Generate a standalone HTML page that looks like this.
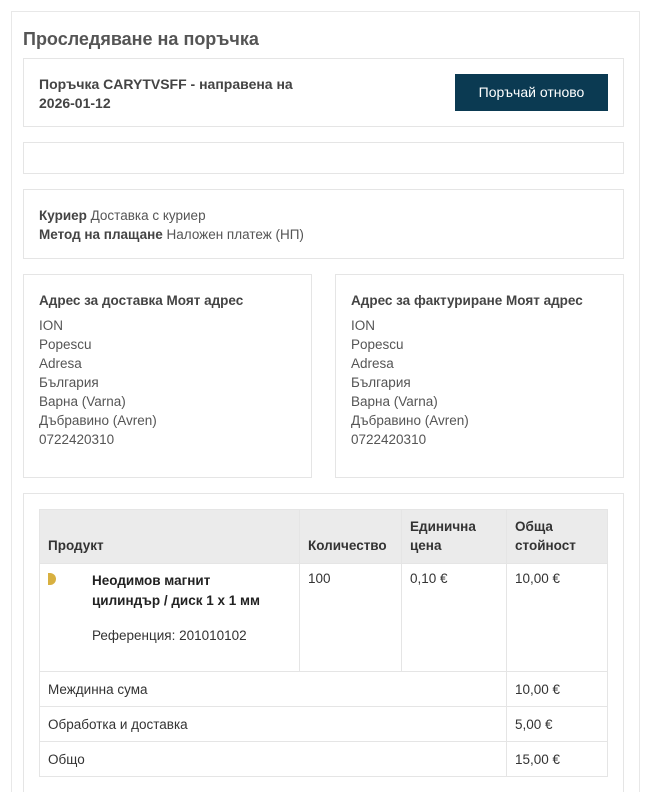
<!DOCTYPE html>
<html style="width:648px;height:792px;overflow:hidden"><head><meta charset="utf-8"><style>
*{box-sizing:border-box;margin:0;padding:0}
body{width:648px;height:792px;background:#fff;font-family:"Liberation Sans",sans-serif;color:#555;font-size:13.5px;overflow:hidden;position:relative}
.abs{position:absolute}
.card{position:absolute;border:1px solid #e5e5e5;background:#fff}
b{color:#444}
table{border-collapse:collapse;position:absolute;left:39px;top:509px;width:569px;font-size:13.5px;color:#333}
td,th{border:1px solid #e5e5e5;vertical-align:top;text-align:left;padding:0 8px}
th{background:#ebebeb;vertical-align:bottom;padding-bottom:8px;font-weight:bold;color:#333;line-height:19px}
</style></head><body>
<div class="card" style="left:11px;top:11px;width:629px;height:800px;border-color:#e8e8e8"></div>
<div class="abs" style="left:23px;top:29px;font-size:18px;font-weight:bold;color:#555">Проследяване на поръчка</div>
<div class="card" style="left:23px;top:58px;width:601px;height:69px"></div>
<div class="abs" style="left:39px;top:75px;font-weight:bold;line-height:19px;color:#444;font-size:14px">Поръчка CARYTVSFF - направена на<br>2026-01-12</div>
<div class="abs" style="left:455px;top:74px;width:153px;height:37px;background:#0b3a52;color:#fff;font-size:14px;text-align:center;line-height:37px">Поръчай отново</div>
<div class="card" style="left:23px;top:142px;width:601px;height:32px"></div>
<div class="card" style="left:23px;top:189px;width:601px;height:70px"></div>
<div class="abs" style="left:39px;top:206px;line-height:19px"><b>Куриер</b> Доставка с куриер<br><b>Метод на плащане</b> Наложен платеж (НП)</div>
<div class="card" style="left:23px;top:274px;width:289px;height:204px"></div>
<div class="card" style="left:335px;top:274px;width:289px;height:204px"></div>
<div class="abs" style="left:39px;top:291px;line-height:19px"><b>Адрес за доставка Моят адрес</b><div style="margin-top:6px">ION<br>Popescu<br>Adresa<br>България<br>Варна (Varna)<br>Дъбравино (Avren)<br>0722420310</div></div>
<div class="abs" style="left:351px;top:291px;line-height:19px"><b>Адрес за фактуриране Моят адрес</b><div style="margin-top:6px">ION<br>Popescu<br>Adresa<br>България<br>Варна (Varna)<br>Дъбравино (Avren)<br>0722420310</div></div>
<div class="card" style="left:23px;top:493px;width:601px;height:320px"></div>
<table>
<tr style="height:54px"><th style="width:260px">Продукт</th><th style="width:102px;padding-right:2px">Количество</th><th style="width:105px">Единична цена</th><th>Обща стойност</th></tr>
<tr style="height:108px"><td style="padding-top:7px;line-height:20px"><div style="position:relative;padding-left:44px"><span style="position:absolute;left:0;top:2px;width:8px;height:12px;background:#d8b040;border-radius:0 6px 6px 0"></span><b style="color:#222">Неодимов магнит<br>цилиндър / диск 1 x 1 мм</b><div style="margin-top:15px">Референция: 201010102</div></div></td><td style="padding-top:7px">100</td><td style="padding-top:7px">0,10 €</td><td style="padding-top:7px">10,00 €</td></tr>
<tr style="height:35px"><td colspan="3" style="vertical-align:middle">Междинна сума</td><td style="vertical-align:middle">10,00 €</td></tr>
<tr style="height:35px"><td colspan="3" style="vertical-align:middle">Обработка и доставка</td><td style="vertical-align:middle">5,00 €</td></tr>
<tr style="height:35px"><td colspan="3" style="vertical-align:middle">Общо</td><td style="vertical-align:middle">15,00 €</td></tr>
</table>
</body></html>
